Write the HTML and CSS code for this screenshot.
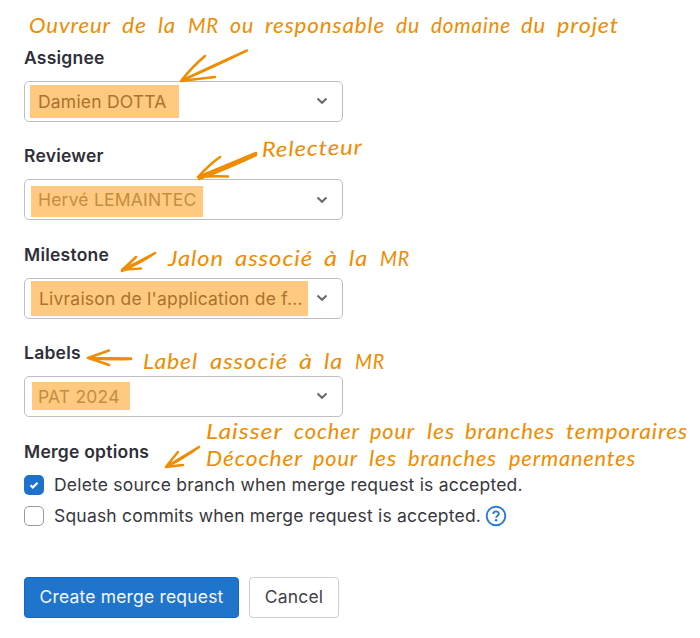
FILE: index.html
```html
<!DOCTYPE html>
<html lang="en">
<head>
<meta charset="utf-8">
<title>New merge request</title>
<link rel="stylesheet" href="styles.css">
</head>
<body>
<form class="form">
  <div class="field">
    <span class="label">Assignee</span>
    <div class="select"><span class="value v-assignee">Damien DOTTA</span><svg class="chevron" viewBox="0 0 12 8"><path d="M1.500 1.500 6 5.800l4.500-4.300"/></svg></div>
  </div>
  <div class="field">
    <span class="label">Reviewer</span>
    <div class="select"><span class="value v-reviewer muted">Hervé LEMAINTEC</span><svg class="chevron" viewBox="0 0 12 8"><path d="M1.500 1.500 6 5.800l4.500-4.300"/></svg></div>
  </div>
  <div class="field">
    <span class="label">Milestone</span>
    <div class="select"><span class="value v-milestone">Livraison de l'application de f...</span><svg class="chevron" viewBox="0 0 12 8"><path d="M1.500 1.500 6 5.800l4.500-4.300"/></svg></div>
  </div>
  <div class="field">
    <span class="label">Labels</span>
    <div class="select"><span class="value v-labels muted">PAT 2024</span><svg class="chevron" viewBox="0 0 12 8"><path d="M1.500 1.500 6 5.800l4.500-4.300"/></svg></div>
  </div>
  <div class="options">
    <span class="label">Merge options</span>
    <div class="option">
      <span class="check checked"><svg viewBox="0 0 20 20"><path d="m6.500 10.300 2.300 2.200 4.700-4.700"/></svg></span>
      <span class="option-text">Delete source branch when merge request is accepted.</span>
    </div>
    <div class="option">
      <span class="check"></span>
      <span class="option-text">Squash commits when merge request is accepted.</span>
      <svg class="help" viewBox="0 0 22 22"><circle cx="11" cy="11" r="9.300"/><path d="M8.300 9c0-3.600 5.500-3.400 5.500-.3 0 2-2.600 2-2.600 4"/><circle class="dot" cx="11.100" cy="15.300" r="1.300"/></svg>
    </div>
  </div>
  <div class="actions">
    <button type="button" class="button primary">Create merge request</button>
    <button type="button" class="button">Cancel</button>
  </div>
</form>

<svg class="notes" viewBox="0 0 700 638">
  <g class="hand">
    <text x="29" y="33" textLength="82" lengthAdjust="spacingAndGlyphs">Ouvreur</text>
    <text x="122" y="33" textLength="25" lengthAdjust="spacingAndGlyphs">de</text>
    <text x="158" y="33" textLength="18" lengthAdjust="spacingAndGlyphs">la</text>
    <text x="188" y="33" textLength="31" lengthAdjust="spacingAndGlyphs">MR</text>
    <text x="230" y="33" textLength="24" lengthAdjust="spacingAndGlyphs">ou</text>
    <text x="265" y="33" textLength="120" lengthAdjust="spacingAndGlyphs">responsable</text>
    <text x="396" y="33" textLength="24" lengthAdjust="spacingAndGlyphs">du</text>
    <text x="431" y="33" textLength="80" lengthAdjust="spacingAndGlyphs">domaine</text>
    <text x="521" y="33" textLength="25" lengthAdjust="spacingAndGlyphs">du</text>
    <text x="557" y="33" textLength="62" lengthAdjust="spacingAndGlyphs">projet</text>

    <text x="262" y="157" textLength="101" lengthAdjust="spacingAndGlyphs" transform="rotate(-1.500 262 157)">Relecteur</text>

    <text x="168" y="265.500" textLength="56" lengthAdjust="spacingAndGlyphs">Jalon</text>
    <text x="235" y="265.500" textLength="78" lengthAdjust="spacingAndGlyphs">associé</text>
    <text x="324" y="265.500" textLength="14" lengthAdjust="spacingAndGlyphs">à</text>
    <text x="349" y="265.500" textLength="19" lengthAdjust="spacingAndGlyphs">la</text>
    <text x="380" y="265.500" textLength="30" lengthAdjust="spacingAndGlyphs">MR</text>

    <text x="143" y="368.500" textLength="55" lengthAdjust="spacingAndGlyphs">Label</text>
    <text x="210" y="368.500" textLength="78" lengthAdjust="spacingAndGlyphs">associé</text>
    <text x="299" y="368.500" textLength="14" lengthAdjust="spacingAndGlyphs">à</text>
    <text x="324" y="368.500" textLength="19" lengthAdjust="spacingAndGlyphs">la</text>
    <text x="355" y="368.500" textLength="30" lengthAdjust="spacingAndGlyphs">MR</text>

    <text x="206" y="438.500" textLength="77" lengthAdjust="spacingAndGlyphs">Laisser</text>
    <text x="294" y="438.500" textLength="66" lengthAdjust="spacingAndGlyphs">cocher</text>
    <text x="370" y="438.500" textLength="45" lengthAdjust="spacingAndGlyphs">pour</text>
    <text x="427" y="438.500" textLength="28" lengthAdjust="spacingAndGlyphs">les</text>
    <text x="465" y="438.500" textLength="90" lengthAdjust="spacingAndGlyphs">branches</text>
    <text x="566" y="438.500" textLength="122" lengthAdjust="spacingAndGlyphs">temporaires</text>

    <text x="206" y="465.500" textLength="97" lengthAdjust="spacingAndGlyphs">Décocher</text>
    <text x="313" y="465.500" textLength="45" lengthAdjust="spacingAndGlyphs">pour</text>
    <text x="369" y="465.500" textLength="28" lengthAdjust="spacingAndGlyphs">les</text>
    <text x="408" y="465.500" textLength="89" lengthAdjust="spacingAndGlyphs">branches</text>
    <text x="509" y="465.500" textLength="127" lengthAdjust="spacingAndGlyphs">permanentes</text>
  </g>
  <g class="arrows">
    <path d="M247 50.500Q222 63 181 81M246 51Q215 65 181 81M205 56Q192 67 181 81Q197 79 215 77"/>
    <path d="M256 153Q230 164 198 177M256 155Q226 169 199 179M220 157Q210 164 198 177Q212 176 228 176.500"/>
    <path d="M155 253Q139 262 122 270M155 253Q142 262 122 271M136 257Q130 263 122 270Q131 269 141 268.500"/>
    <path d="M131 358.500Q109 358 88 358M131 359Q108 360 89 358M109 350.500Q99 354 88 358Q98 361 109 365"/>
    <path d="M199 447Q184 456 166 467M199 447Q184 458 166 467M178 452Q172 459 166 467Q174 466 183 465"/>
  </g>
</svg>
</body>
</html>
```
FILE: styles.css
```css
* { box-sizing: border-box; }
body {
  margin: 0;
  width: 700px;
  height: 638px;
  overflow: hidden;
  background: #fff;
  color: #38373d;
  font: 17.5px/20px Inter, "Liberation Sans", sans-serif;
  letter-spacing: .2px;
}
.form { padding: 48px 0 0 24px; }
.field { height: 98.4px; }
.label {
  display: block;
  height: 20px;
  color: #302f38;
  font-weight: 600;
  letter-spacing: .24px;
}
.select {
  display: flex;
  align-items: center;
  width: 319px;
  height: 41px;
  margin-top: 12.800px;
  padding: 0 14px 0 5px;
  border: 1.500px solid #bfbfc3;
  border-radius: 5px;
}
.value {
  display: flex;
  align-items: center;
  height: 33px;
  padding: 1px 0 0 8px;
  background: #ffca80;
  color: #a9732c;
  white-space: nowrap;
}
.value.muted { color: #c28e42; }
.v-assignee { width: 149px; }
.v-reviewer { width: 172px; height: 31px; margin: 3px 0 0 1px; padding: 0 0 2px 7px; }
.v-milestone { width: 277px; height: 35px; margin-left: 1px; }
.v-labels { width: 98px; height: 28px; margin-left: 2px; padding-left: 6px; }
.chevron {
  width: 12px;
  height: 8px;
  margin-left: auto;
  fill: none;
  stroke: #69686e;
  stroke-width: 2;
}
.option { display: flex; align-items: center; height: 31px; }
.options .label { margin-bottom: 8px; }
.check {
  width: 20px;
  height: 20px;
  margin-right: 10px;
  border: 1.500px solid #99989e;
  border-radius: 5px;
}
.checked { border: 0; background: #1f72cb; }
.check svg { display: block; fill: none; stroke: #fff; stroke-width: 2.200; }
.option-text { white-space: nowrap; }
.help {
  width: 22px;
  height: 22px;
  margin-left: 4px;
  fill: none;
  stroke: #2b7bd0;
  stroke-width: 1.900;
}
.help .dot { fill: #2b7bd0; stroke: none; }
.actions { display: flex; gap: 10px; margin-top: 45px; }
.button {
  width: 90px;
  height: 41px;
  padding: 0;
  border: 1.500px solid #cfcfd1;
  border-radius: 4px;
  background: #fff;
  color: #434248;
  font: 17.5px/20px Inter, "Liberation Sans", sans-serif;
  letter-spacing: .18px;
  white-space: nowrap;
}
.primary { width: 215px; border-color: #1068bf; background: #1f75cb; color: #f4f8ff; }
.notes { position: absolute; left: 0; top: 0; width: 700px; height: 638px; pointer-events: none; }
.hand text { fill: #f08c00; font: italic 21px Lato, sans-serif; letter-spacing: .8px; }
.arrows { fill: none; stroke: #f08c00; stroke-width: 2.500; stroke-linecap: round; stroke-linejoin: round; }
```
